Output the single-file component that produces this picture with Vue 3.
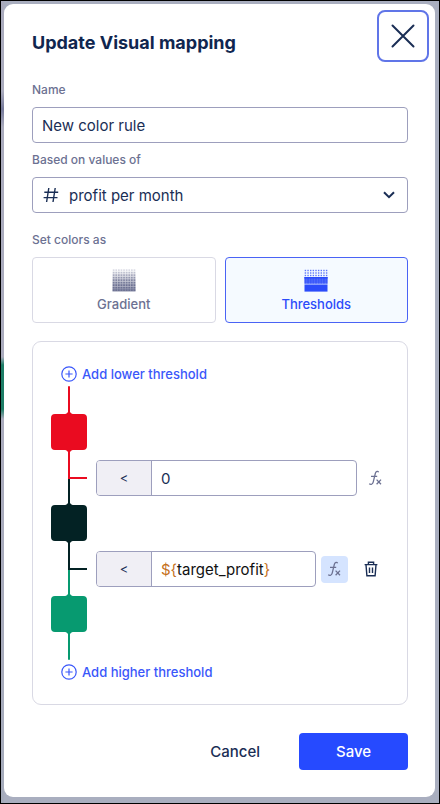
<template>
  <div class="backdrop">
    <form class="dialog" role="dialog" aria-labelledby="dialog-title" @submit.prevent>
      <header class="dialog-header">
        <h1 id="dialog-title">Update Visual mapping</h1>
        <button type="button" class="close" aria-label="Close">
          <svg width="24" height="24" viewBox="0 0 24 24">
            <path d="M1.5 1.5l21 21M22.5 1.5l-21 21" />
          </svg>
        </button>
      </header>

      <div class="dialog-body">
        <label class="caption" for="rule-name">Name</label>
        <input id="rule-name" v-model="name" class="box text-input" type="text" />

        <label class="caption" for="rule-field">Based on values of</label>
        <div class="select-wrap">
          <select id="rule-field" v-model="field" class="box">
            <option v-for="f in fields" :key="f" :value="f">{{ f }}</option>
          </select>
          <svg class="hash" width="16" height="16" viewBox="0 0 16 16">
            <path d="M5.8 1L3.6 15M12.2 1L10 15M1.3 5.3H15.2M.6 10.6H14.5" />
          </svg>
          <svg class="chevron" width="12" height="8" viewBox="0 0 12 8">
            <path d="M1 1.2l5 5 5-5" />
          </svg>
        </div>

        <fieldset class="modes">
          <legend class="caption">Set colors as</legend>
          <div class="mode-list">
            <label v-for="m in modes" :key="m.id" class="mode" :class="{ active: mode === m.id }">
              <input v-model="mode" type="radio" name="mode" :value="m.id" />
              <svg width="24" height="23" viewBox="0 0 24 23">
                <rect
                  v-for="(d, i) in m.dots"
                  :key="i"
                  :x="d.x"
                  :y="d.y"
                  :width="d.w"
                  :height="d.h"
                  :opacity="d.o"
                />
              </svg>
              <span>{{ m.title }}</span>
            </label>
          </div>
        </fieldset>

        <section class="thresholds">
          <button type="button" class="add">
            <svg width="16" height="16" viewBox="0 0 16 16">
              <circle cx="8" cy="8" r="7.2" />
              <path d="M8 4.4v7.2M4.4 8h7.2" />
            </svg>
            Add lower threshold
          </button>

          <div class="rail-end" :class="colors[0]"></div>
          <template v-for="(color, i) in colors" :key="color">
            <button type="button" class="swatch" :class="color" :aria-label="'Color ' + (i + 1)">
              <svg width="36" height="40" viewBox="0 0 36 40">
                <path
                  d="M4 2H14C16 2 16 0 18 0S20 2 22 2H32A4 4 0 0 1 36 6V34A4 4 0 0 1 32 38H22C20 38 20 40 18 40S16 38 14 38H4A4 4 0 0 1 0 34V6A4 4 0 0 1 4 2Z"
                />
              </svg>
            </button>
            <div v-if="rows[i]" class="step">
              <div class="rail">
                <div class="elbow" :class="color"></div>
                <div class="stem" :class="colors[i + 1]"></div>
              </div>
              <div class="row">
                <div class="value-box">
                  <span class="operator">&lt;</span>
                  <div class="value" :class="{ formula: rows[i].formula }">
                    <input v-model="rows[i].value" type="text" :aria-label="'Threshold ' + (i + 1)" />
                    <div v-if="rows[i].formula" class="highlight" aria-hidden="true">
                      <span
                        v-for="(t, k) in tokens(rows[i].value)"
                        :key="k"
                        :class="{ mark: /[${}]/.test(t) }"
                        >{{ t }}</span
                      >
                    </div>
                  </div>
                </div>
                <button
                  type="button"
                  class="fx"
                  :class="{ on: rows[i].formula }"
                  aria-label="Use formula"
                >
                  <svg width="15" height="16" viewBox="0 0 15 16">
                    <path
                      d="M10.6 2.2C10 1 8 1 7.4 3.2L5.2 12.2C4.7 14.4 2.8 14.9 1.2 13.8M3 6.3H9.2M8.6 9.6L13 14.2M13 9.6L8.6 14.2"
                    />
                  </svg>
                </button>
                <button v-if="rows[i].removable" type="button" class="trash" aria-label="Remove threshold">
                  <svg width="14" height="16" viewBox="0 0 14 16">
                    <path d="M.6 3.6H13.4M4.4 3.4V1.2H9.6V3.4M2 3.8L2.9 14.8H11.1L12 3.8M5.5 6.6V12M8.5 6.6V12" />
                  </svg>
                </button>
              </div>
            </div>
          </template>
          <div class="rail-end" :class="colors[colors.length - 1]"></div>

          <button type="button" class="add">
            <svg width="16" height="16" viewBox="0 0 16 16">
              <circle cx="8" cy="8" r="7.2" />
              <path d="M8 4.4v7.2M4.4 8h7.2" />
            </svg>
            Add higher threshold
          </button>
        </section>

        <footer class="actions">
          <button type="button" class="cancel">Cancel</button>
          <button type="submit" class="save">Save</button>
        </footer>
      </div>
    </form>
  </div>
</template>

<script setup>
import { ref } from 'vue';

const name = ref('New color rule');
const fields = ['profit per month'];
const field = ref(fields[0]);
const mode = ref('thresholds');

const colors = ['red', 'dark', 'green'];
const rows = ref([
  { value: '0', formula: false, removable: false },
  { value: '${target_profit}', formula: true, removable: true },
]);

const modes = [
  { id: 'gradient', title: 'Gradient', dots: gradientDots() },
  { id: 'thresholds', title: 'Thresholds', dots: thresholdDots() },
];

// dots over a fill that gets denser towards the bottom
function gradientDots() {
  const dots = [];
  for (let r = 0; r < 9; r++) {
    dots.push({ x: 0.5, y: r * 2.5, w: 23, h: 2.5, o: r * 0.1 });
    for (let c = 0; c < 9; c++) {
      dots.push({ x: 0.8 + c * 2.6, y: 0.3 + r * 2.5, w: 1.7, h: 1.7, o: Math.min(1, 0.25 + r * 0.12) });
    }
  }
  return dots;
}

// three bands: sparse dots, dense dots, solid
function thresholdDots() {
  const dots = [];
  for (let r = 0; r < 3; r++) {
    for (let c = 0; c < 9; c++) {
      dots.push({ x: 0.7 + c * 2.65, y: 0.8 + r * 2.5, w: 1.4, h: 1.4, o: 0.75 });
    }
  }
  dots.push({ x: 0.5, y: 8, w: 23, h: 6.6, o: 0.8 });
  for (let c = 0; c < 9; c++) {
    dots.push({ x: 0.5 + c * 2.65, y: 8, w: 1.8, h: 6.6, o: 0.6 });
  }
  dots.push({ x: 0.5, y: 8, w: 23, h: 1.5, o: 1 });
  dots.push({ x: 0.5, y: 14.6, w: 23, h: 1, o: 0.4 });
  dots.push({ x: 0.5, y: 15.6, w: 23, h: 7, o: 1 });
  return dots;
}

function tokens(text) {
  return text.split(/(\$\{|\})/).filter(Boolean);
}
</script>

<style>
body {
  margin: 0;
}
</style>

<style scoped>
.backdrop {
  box-sizing: border-box;
  min-height: 100vh;
  padding: 3px 4px 6px 3px;
  border: 1px solid #000;
  background:
    linear-gradient(#aaabbd, #aaabbd 90px, #75799a 108px, #aaabbd 126px, #aaabbd 356px, #1d7d66 364px, #1d7d66 408px, #aaabbd 418px, #a5abbb) left top / 3px 100% no-repeat,
    #a9aebf;
  font-family: Inter, "Liberation Sans", sans-serif;
  color: #1a2e55;
}

.dialog {
  border-radius: 9px;
  background: #fff;
}

button,
input,
select {
  box-sizing: border-box;
  margin: 0;
  padding: 0;
  border: 0;
  background: none;
  color: inherit;
  font: inherit;
}

button {
  cursor: pointer;
}

svg {
  display: block;
  fill: none;
  stroke: currentColor;
}

.dialog-header {
  display: flex;
  align-items: flex-end;
  justify-content: space-between;
  padding: 6px 6px 0 28px;
}

h1 {
  margin: 0;
  font-size: 18px;
  font-weight: 700;
  line-height: 38px;
  color: #10264f;
}

.close {
  display: flex;
  align-items: center;
  justify-content: center;
  width: 52px;
  height: 52px;
  border: 2px solid #6075e8;
  border-radius: 8px;
}

.close svg {
  stroke-width: 2;
  stroke-linecap: round;
}

.dialog-body {
  padding: 19px 27px 27px 28px;
}

.caption {
  display: block;
  padding: 0;
  margin-bottom: 8px;
  font-size: 12px;
  font-weight: 500;
  line-height: 18px;
  color: #6c7192;
}

.box {
  width: 100%;
  height: 36px;
  border: 1px solid #9d9fbd;
  border-radius: 4px;
  font-size: 15px;
}

.text-input {
  display: block;
  margin-bottom: 8px;
  padding: 0 9px;
}

.select-wrap {
  display: grid;
  align-items: center;
  margin-bottom: 18px;
}

.select-wrap > * {
  grid-area: 1 / 1;
}

.select-wrap select {
  appearance: none;
  padding: 0 36px;
}

.select-wrap svg {
  pointer-events: none;
}

.hash {
  margin-left: 11px;
  stroke-width: 1.4;
}

.chevron {
  justify-self: end;
  margin-right: 13px;
  stroke-width: 2;
}

.modes {
  min-width: 0;
  margin: 0 0 18px;
  padding: 0;
  border: 0;
}

.mode-list {
  display: flex;
  gap: 9px;
}

.mode {
  box-sizing: border-box;
  display: flex;
  flex: 1;
  flex-direction: column;
  align-items: center;
  gap: 3px;
  height: 66px;
  padding-top: 11px;
  border: 1px solid #d9d9e4;
  border-radius: 4px;
  font-size: 13px;
  font-weight: 500;
  line-height: 18px;
  color: #6c7192;
  cursor: pointer;
}

.mode input {
  position: absolute;
  opacity: 0;
}

.mode svg {
  fill: currentColor;
  stroke: none;
}

.mode.active {
  border-color: #4a63f5;
  background: #f5faff;
  color: #2b4bfa;
}

.thresholds {
  padding: 20px 18px;
  border: 1px solid #d9d9e4;
  border-radius: 9px;
}

.add {
  display: flex;
  align-items: center;
  gap: 5px;
  height: 24px;
  margin-left: 10px;
  font-size: 13px;
  font-weight: 500;
  color: #3a57fa;
}

.add svg {
  stroke-width: 1.2;
}

.red {
  color: #ea0b20;
}

.dark {
  color: #032224;
}

.green {
  color: #079a70;
}

.rail-end {
  width: 2px;
  height: 28px;
  margin-left: 17px;
  border-radius: 1px;
  background: currentColor;
}

.swatch {
  display: block;
  width: 36px;
  height: 36px;
}

.swatch svg {
  margin: -2px 0;
  fill: currentColor;
  stroke: none;
}

.step {
  display: flex;
  gap: 9px;
}

.rail {
  flex: none;
  width: 19px;
  padding-left: 17px;
}

.elbow {
  height: 27px;
  border: solid currentColor;
  border-width: 0 0 2px 2px;
}

.stem {
  height: 26px;
  border-left: 2px solid currentColor;
}

.row {
  display: flex;
  flex: 1;
  align-items: center;
  gap: 5px;
  min-width: 0;
  padding: 10px 0 9px;
}

.value-box {
  box-sizing: border-box;
  display: flex;
  flex: 1;
  min-width: 0;
  height: 36px;
  overflow: hidden;
  border: 1px solid #9d9fbd;
  border-radius: 4px;
  font-size: 15px;
}

.operator {
  display: flex;
  flex: none;
  align-items: center;
  justify-content: center;
  width: 54px;
  border-right: 1px solid #9d9fbd;
  background: #f0eff5;
  font-size: 13px;
}

.value {
  display: grid;
  flex: 1;
  align-items: center;
  min-width: 0;
}

.value > * {
  grid-area: 1 / 1;
  min-width: 0;
  width: 100%;
  box-sizing: border-box;
  padding: 0 9px;
}

.formula input {
  color: transparent;
  caret-color: #000;
}

.highlight {
  color: #111;
  white-space: pre;
  pointer-events: none;
}

.mark {
  color: #c5711c;
}

.fx {
  display: flex;
  flex: none;
  align-items: center;
  justify-content: center;
  width: 27px;
  height: 27px;
  border-radius: 4px;
  color: #6c7192;
}

.fx svg {
  stroke-width: 1.3;
}

.fx.on {
  background: #d5e4ff;
}

.trash {
  display: flex;
  flex: none;
  align-items: center;
  justify-content: center;
  width: 36px;
  height: 36px;
}

.trash svg {
  stroke-width: 1.4;
}

.actions {
  display: flex;
  justify-content: flex-end;
  margin-top: 28px;
}

.actions button {
  height: 37px;
  border-radius: 4px;
  font-size: 15px;
  font-weight: 500;
}

.cancel {
  padding: 0 39px;
}

.save {
  width: 109px;
}

.actions .save {
  background: #264aff;
  color: #fff;
}
</style>
